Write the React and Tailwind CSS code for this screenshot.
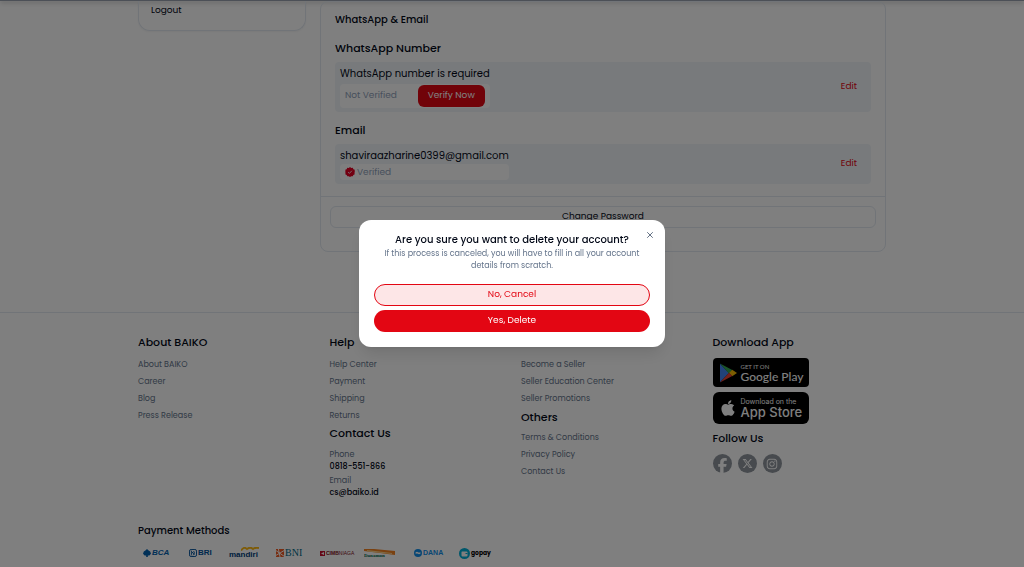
import React, { useState } from 'react';
import { FaFacebookF, FaXTwitter, FaInstagram, FaApple } from 'react-icons/fa6';
import { LuX } from 'react-icons/lu';

const ABOUT_LINKS = ['About BAIKO', 'Career', 'Blog', 'Press Release'];
const HELP_LINKS = ['Help Center', 'Payment', 'Shipping', 'Returns'];
const SELLER_LINKS = ['Become a Seller', 'Seller Education Center', 'Seller Promotions'];
const OTHER_LINKS = ['Terms & Conditions', 'Privacy Policy', 'Contact Us'];

const FooterTitle = ({ children }) => (
    <h3 className="text-[11px] leading-4 font-medium">{children}</h3>
);

const FooterLinks = ({ items }) => (
    <ul className="text-[8px] leading-[17px] text-[#64748b]">
        {items.map((item) => (
            <li key={item}>
                <a href="#">{item}</a>
            </li>
        ))}
    </ul>
);

const VerifiedBadge = () => (
    <svg className="size-[10px]" viewBox="0 0 24 24">
        <path
            fill="#e60023"
            d="M12 0l3 2.200 3.600-.4 1.500 3.400 3.400 1.500-.4 3.600L24 12l-1.500 2 .9 3.400-3.400 1.500-1.400 3.400-3.600-.4L12 24l-3-2.100-3.600.4L4 18.900.6 17.400l.9-3.400L0 12l1.400-2-.9-3.300L4 5.200l1.400-3.400 3.600.4z"
        />
        <path d="M7.500 12.300l3 3 6-6.300" fill="none" stroke="#fff" strokeWidth="2" />
    </svg>
);

const GooglePlayMark = () => (
    <svg className="h-5 w-[18px] shrink-0" viewBox="0 0 18 20">
        <path fill="#4285f4" d="M1 .8v18.400L10 10z" />
        <path fill="#34a853" d="M1 .6L13.300 7 10 10.400z" />
        <path fill="#fbbc04" d="M13.200 6.800L18 10l-4.800 3.200L10 10z" />
        <path fill="#ea4335" d="M1 19.400L13.300 13 10 9.700z" />
    </svg>
);

const PaymentMethods = () => (
    <ul className="mt-1 flex h-5 items-center font-['Liberation_Sans',sans-serif] text-[8px] leading-3 font-bold">
        <li className="flex w-[46px] items-center gap-px pl-[5px] text-[#0060af]">
            <svg className="size-2" viewBox="0 0 10 10">
                <path fill="#0060af" d="M5 0l2 2 2 1 1 3-2 2H6v2H4V8H2L0 6l1-3 2-1z" />
            </svg>
            <span className="italic">BCA</span>
        </li>
        <li className="flex w-[45px] items-center gap-px pl-[5px] text-[#00529c]">
            <svg className="size-2" viewBox="0 0 10 10" fill="none" stroke="#00529c">
                <rect x=".6" y=".6" width="8.800" height="8.800" rx="2" strokeWidth="1.200" />
                <path d="M3 2v6M3 3l4 4M3 6l3-3 1 2-2 3" />
            </svg>
            BRI
        </li>
        <li className="flex w-[47px] flex-col text-[#003d79]">
            <svg className="ml-3 h-1 w-[18px]" viewBox="0 0 18 4">
                <path d="M0 3.500C3 0 4 .5 6 2 9 0 10 .5 12 2 14 .5 16 .5 18 1" fill="none" stroke="#fdb813" strokeWidth="2" />
            </svg>
            <span className="leading-2">mandiri</span>
        </li>
        <li className="flex w-[43px] items-center gap-px text-[#006885]">
            <svg className="size-2" viewBox="0 0 10 10">
                <rect width="10" height="10" fill="#f15a23" />
                <path d="M0 2l10 7M3 0l2 10M0 8l10-6" stroke="#fff" strokeWidth="1.200" />
            </svg>
            <span className="font-['Liberation_Serif',serif] text-[10px] font-normal">BNI</span>
        </li>
        <li className="flex w-[45px] items-center gap-px pl-px text-[5px] text-[#7e1018]">
            <svg className="size-[5px]" viewBox="0 0 5 5">
                <rect width="5" height="5" fill="#c8102e" />
                <path d="M1 2.500L4 1v3z" fill="#fff" />
            </svg>
            <span>CIMB<span className="font-normal">NIAGA</span></span>
        </li>
        <li className="w-[50px]">
            <svg className="h-[9px] w-[31px]" viewBox="0 0 31 9">
                <path d="M0 0h10l21 2v4L16 4 0 2z" fill="#f58220" />
                <path d="M3 1l25 3v1L3 2.500z" fill="#fdd28a" />
                <text x="0" y="8" fontSize="5" fontWeight="700" fill="#00694e" fontFamily="Liberation Serif">Danamon</text>
            </svg>
        </li>
        <li className="flex w-[45px] items-center gap-px text-[7px] text-[#118eea]">
            <svg className="size-2" viewBox="0 0 10 10">
                <circle cx="5" cy="5" r="5" fill="#118eea" />
                <path d="M2 4q2-1 3 0t3 0v2q-2 1-3 0T2 6z" fill="#fff" />
            </svg>
            DANA
        </li>
        <li className="flex items-center gap-px font-['Poppins','Inter',sans-serif] text-[6px] text-black">
            <svg className="size-[11px]" viewBox="0 0 11 11">
                <circle cx="5.500" cy="5.500" r="5.500" fill="#00aed6" />
                <path d="M3 3.500h4.500q1 0 1 1V7.500q0 1-1 1h-4q-1 0-1-1v-3q0-1 .5-1z" fill="#fff" />
                <path d="M6.500 5.500h2" stroke="#00aed6" />
            </svg>
            gopay
        </li>
    </ul>
);

const ContactSettings = () => (
    <section className="min-w-0 flex-1 rounded-lg border border-slate-200">
        <div className="px-3.5 pt-2 pb-3">
            <h2 className="text-[10px] leading-5 font-medium">WhatsApp &amp; Email</h2>

            <h3 className="mt-2 text-[11px] leading-5 font-medium">WhatsApp Number</h3>
            <div className="mt-1 flex items-center justify-between rounded-sm bg-slate-100 py-1 pr-3.5 pl-[5px]">
                <div>
                    <p className="text-[10px] leading-4">WhatsApp number is required</p>
                    <div className="mt-0.5 flex items-center justify-between rounded-sm bg-white px-[5px]">
                        <span className="text-[9px] text-slate-400">Not Verified</span>
                        <button className="my-px h-[22px] rounded-md bg-[#e30613] px-2.5 text-[9px] text-white">
                            Verify Now
                        </button>
                    </div>
                </div>
                <button className="text-[9px] text-[#e30613]">Edit</button>
            </div>

            <h3 className="mt-2 text-[11px] leading-5 font-medium">Email</h3>
            <div className="mt-1 flex items-center justify-between rounded-sm bg-slate-100 py-1 pr-3.5 pl-[5px]">
                <div>
                    <p className="text-[10px] leading-4">shaviraazharine0399@gmail.com</p>
                    <div className="flex items-center gap-0.5 rounded-sm bg-white px-[5px] text-[9px] leading-4 text-slate-400">
                        <VerifiedBadge />
                        Verified
                    </div>
                </div>
                <button className="text-[9px] text-[#e30613]">Edit</button>
            </div>
        </div>
        <div className="border-t border-slate-200 px-[9px] pt-[9px] pb-[23px]">
            <button className="block h-[22px] w-full rounded-md border border-slate-200 text-[9px]">
                Change Password
            </button>
        </div>
    </section>
);

const Footer = () => (
    <footer className="mt-[60px] border-t border-slate-200">
        <div className="mx-auto max-w-[748px] pt-[21px]">
            <div className="grid grid-cols-4 gap-x-[18px]">
                <div className="flex flex-col gap-1.5">
                    <FooterTitle>About BAIKO</FooterTitle>
                    <FooterLinks items={ABOUT_LINKS} />
                </div>
                <div className="flex flex-col gap-px">
                    <div className="flex flex-col gap-1.5">
                        <FooterTitle>Help</FooterTitle>
                        <FooterLinks items={HELP_LINKS} />
                    </div>
                    <div className="flex flex-col gap-2">
                        <FooterTitle>Contact Us</FooterTitle>
                        <dl className="text-[8px] leading-3">
                            <dt className="text-[#64748b]">Phone</dt>
                            <dd className="font-medium">0818-551-866</dd>
                            <dt className="mt-0.5 text-[#64748b]">Email</dt>
                            <dd className="font-medium">cs@baiko.id</dd>
                        </dl>
                    </div>
                </div>
                <div className="flex flex-col gap-0.5 pt-[22px]">
                    <FooterLinks items={SELLER_LINKS} />
                    <div className="flex flex-col gap-1">
                        <FooterTitle>Others</FooterTitle>
                        <FooterLinks items={OTHER_LINKS} />
                    </div>
                </div>
                <div>
                    <FooterTitle>Download App</FooterTitle>
                    <a href="#" className="mt-2 flex h-[29px] w-24 items-center gap-1 rounded-sm bg-black pl-1.5 whitespace-nowrap text-white">
                        <GooglePlayMark />
                        <span className="flex flex-col font-['Lato',sans-serif]">
                            <span className="text-[6px] leading-2">GET IT ON</span>
                            <span className="text-[12px] leading-3 font-medium">Google Play</span>
                        </span>
                    </a>
                    <a href="#" className="mt-[5px] flex h-8 w-24 items-center gap-1 rounded-md bg-black pl-1.5 whitespace-nowrap text-white">
                        <FaApple className="size-[18px] shrink-0" />
                        <span className="flex flex-col font-['Inter',sans-serif]">
                            <span className="text-[7px] leading-2">Download on the</span>
                            <span className="text-[13px] leading-3 font-medium">App Store</span>
                        </span>
                    </a>
                    <div className="mt-1.5"><FooterTitle>Follow Us</FooterTitle></div>
                    <div className="mt-2 flex gap-1.5 text-white">
                        <a href="#" aria-label="Facebook" className="flex size-[19px] items-end justify-center rounded-full bg-[#8f959d]">
                            <FaFacebookF className="size-[15px]" />
                        </a>
                        <a href="#" aria-label="X" className="flex size-[19px] items-center justify-center rounded-full bg-[#8f959d]">
                            <FaXTwitter className="size-[11px]" />
                        </a>
                        <a href="#" aria-label="Instagram" className="flex size-[19px] items-center justify-center rounded-full bg-[#8f959d]">
                            <FaInstagram className="size-3" />
                        </a>
                    </div>
                </div>
            </div>
            <h3 className="mt-6 text-[10px] leading-4 font-medium">Payment Methods</h3>
            <PaymentMethods />
        </div>
    </footer>
);

const DeleteAccountDialog = ({ onClose }) => (
    <div className="fixed inset-0 flex items-center justify-center bg-black/50">
        <div
            role="dialog"
            aria-modal="true"
            aria-labelledby="delete-title"
            className="relative w-[306px] rounded-xl bg-white px-[15px] pt-3 pb-[15px] text-center shadow-lg"
        >
            <button aria-label="Close" onClick={onClose} className="absolute top-2.5 right-2.5 text-slate-600">
                <LuX className="size-2.5" />
            </button>
            <h2 id="delete-title" className="text-[10px] leading-4 font-medium">
                Are you sure you want to delete your account?
            </h2>
            <p className="text-[8px] leading-3 text-[#64748b]">
                If this process is canceled, you will have to fill in all your account details from scratch.
            </p>
            <div className="mt-3 flex flex-col gap-1">
                <button
                    onClick={onClose}
                    className="h-[22px] rounded-full border border-[#e30613] bg-[#fde6e7] text-[9px] text-[#e30613]"
                >
                    No, Cancel
                </button>
                <button onClick={onClose} className="h-[22px] rounded-full bg-[#e30613] text-[9px] text-white">
                    Yes, Delete
                </button>
            </div>
        </div>
    </div>
);

export default function App() {
    const [showDialog, setShowDialog] = useState(true);

    return (
        <div className="min-h-screen bg-white font-['Poppins','Inter',sans-serif] text-[#020817]">
            {/* bottom edge of the sticky header */}
            <div className="h-px bg-gray-400 shadow-[0_1px_5px_rgba(0,0,0,0.6)]" />
            <main className="mx-auto flex max-w-[748px] items-start gap-3.5">
                <aside className="h-[30px] w-[168px] rounded-b-xl border border-t-0 border-slate-200 px-3 text-[9px] shadow-xs">
                    <a href="#" className="mt-px block leading-4">Logout</a>
                </aside>
                <ContactSettings />
            </main>
            <Footer />
            {showDialog && <DeleteAccountDialog onClose={() => setShowDialog(false)} />}
        </div>
    );
}
